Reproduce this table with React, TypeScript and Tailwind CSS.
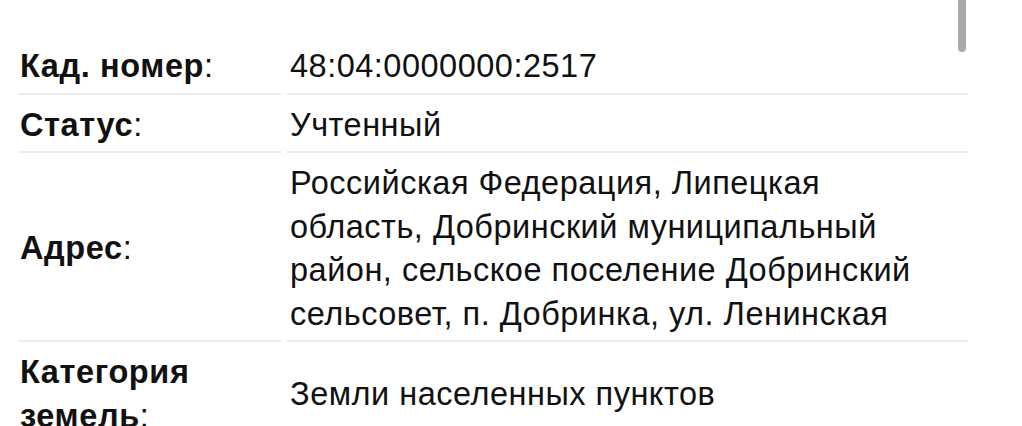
import React from "react";

const rows: { label: string[]; value: string }[] = [
  { label: ["Кад. номер"], value: "48:04:0000000:2517" },
  { label: ["Статус"], value: "Учтенный" },
  {
    label: ["Адрес"],
    value:
      "Российская Федерация, Липецкая область, Добринский муниципальный район, сельское поселение Добринский сельсовет, п. Добринка, ул. Ленинская",
  },
  { label: ["Категория земель"], value: "Земли населенных пунктов" },
];

export default function App() {
  return (
    <div
      className="relative w-[1022px] h-[426px] overflow-hidden bg-white text-[#111111]"
      style={{ fontFamily: '"Liberation Sans", Arial, sans-serif' }}
    >
      <div className="absolute left-[958px] top-[-10px] w-[8px] h-[62px] rounded-full bg-[#a9a9a9]" />
      <div className="pt-[36px] pl-[18px] w-[968px] flex flex-col">
        {rows.map((r, i) => (
          <div key={i} className="flex gap-[6px]">
            <div className="w-[263px] shrink-0 flex items-center border-b-2 border-[#ececec] pt-[9px] pb-[4px] pl-[2px]">
              <span className="text-[32.5px] leading-[43.5px] tracking-[0.6px]">
                <b className="font-bold">{r.label[0]}</b>:
              </span>
            </div>
            <div className="flex-1 flex items-center border-b-2 border-[#ececec] pt-[9px] pb-[4px] pl-[3px] pr-[40px]">
              <span className="text-[32.5px] leading-[43.5px] tracking-[0.5px]">{r.value}</span>
            </div>
          </div>
        ))}
      </div>
    </div>
  );
}
